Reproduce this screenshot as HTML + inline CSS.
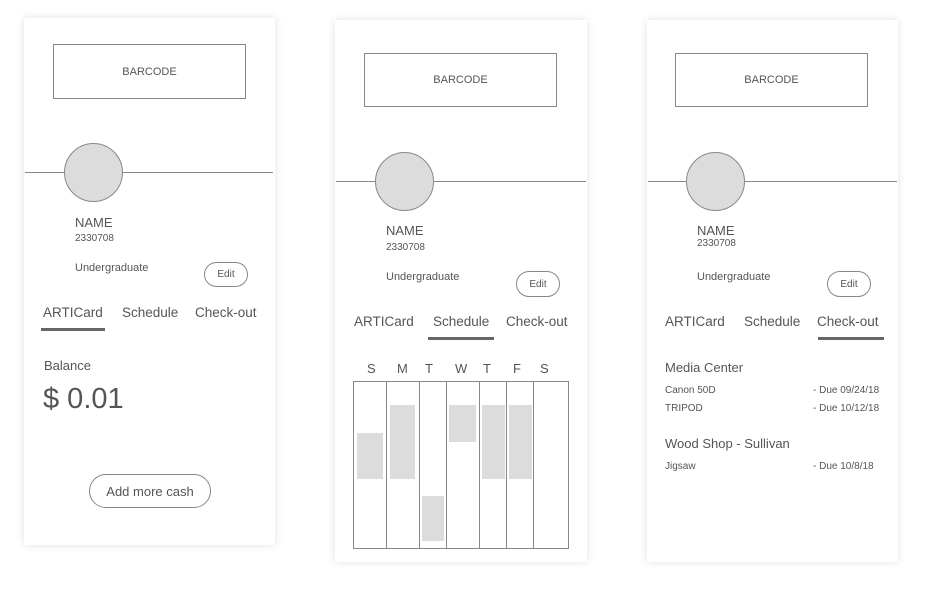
<!DOCTYPE html>
<html><head><meta charset="utf-8"><style>
*{margin:0;padding:0;box-sizing:border-box}
body{width:933px;height:597px;background:#fff;position:relative;overflow:hidden;font-family:"Liberation Sans",Arial,sans-serif;color:#555}
.a{position:absolute;line-height:1;white-space:nowrap}
.card{position:absolute;background:#fff;box-shadow:0 0 8px rgba(0,0,0,0.12)}
.bc{position:absolute;border:1px solid #888;font-size:11px;display:flex;align-items:center;justify-content:center;color:#555}
.ln{position:absolute;height:1px;background:#888}
.cir{position:absolute;width:59px;height:59px;border-radius:50%;background:#dcdcdc;border:1px solid #888}
.btn{position:absolute;border:1px solid #888;border-radius:14px;display:flex;align-items:center;justify-content:center;background:#fff}
.ul{position:absolute;height:3px;background:#666}
.blk{position:absolute;background:#dcdcdc}
.vl{position:absolute;width:1px;background:#888;top:381px;height:168px}
</style></head><body>

<!-- Card 1 -->
<div class="card" style="left:24px;top:18px;width:251px;height:527px"></div>
<div class="bc" style="left:53px;top:44px;width:193px;height:55px">BARCODE</div>
<div class="ln" style="left:25px;top:172px;width:248px"></div>
<div class="cir" style="left:64px;top:143px"></div>
<div class="a" style="left:75px;top:216px;font-size:13px">NAME</div>
<div class="a" style="left:75px;top:234px;font-size:10px">2330708</div>
<div class="a" style="left:75px;top:263px;font-size:11px">Undergraduate</div>
<div class="btn" style="left:204px;top:262px;width:44px;height:25px;font-size:10px">Edit</div>
<div class="a" style="left:43px;top:306px;font-size:13.5px">ARTICard</div>
<div class="a" style="left:122px;top:306px;font-size:13.5px">Schedule</div>
<div class="a" style="left:195px;top:306px;font-size:13.5px">Check-out</div>
<div class="ul" style="left:41px;top:328px;width:64px"></div>
<div class="a" style="left:44px;top:359px;font-size:13px">Balance</div>
<div class="a" style="left:43px;top:385px;font-size:29px">$ 0.01</div>
<div class="btn" style="left:89px;top:474px;width:122px;height:34px;border-radius:17px;font-size:13px">Add more cash</div>

<!-- Card 2 -->
<div class="card" style="left:335px;top:20px;width:252px;height:542px"></div>
<div class="bc" style="left:364px;top:53px;width:193px;height:54px">BARCODE</div>
<div class="ln" style="left:336px;top:181px;width:250px"></div>
<div class="cir" style="left:375px;top:152px"></div>
<div class="a" style="left:386px;top:224px;font-size:13px">NAME</div>
<div class="a" style="left:386px;top:243px;font-size:10px">2330708</div>
<div class="a" style="left:386px;top:272px;font-size:11px">Undergraduate</div>
<div class="btn" style="left:516px;top:271px;width:44px;height:26px;font-size:10px">Edit</div>
<div class="a" style="left:354px;top:315px;font-size:13.5px">ARTICard</div>
<div class="a" style="left:433px;top:315px;font-size:13.5px">Schedule</div>
<div class="a" style="left:506px;top:315px;font-size:13.5px">Check-out</div>
<div class="ul" style="left:428px;top:337px;width:66px"></div>
<div class="a" style="left:367px;top:362px;font-size:13px">S</div>
<div class="a" style="left:397px;top:362px;font-size:13px">M</div>
<div class="a" style="left:425px;top:362px;font-size:13px">T</div>
<div class="a" style="left:455px;top:362px;font-size:13px">W</div>
<div class="a" style="left:483px;top:362px;font-size:13px">T</div>
<div class="a" style="left:513px;top:362px;font-size:13px">F</div>
<div class="a" style="left:540px;top:362px;font-size:13px">S</div>
<div style="position:absolute;left:353px;top:381px;width:216px;height:168px;border:1px solid #888"></div>
<div class="vl" style="left:386px"></div>
<div class="vl" style="left:419px"></div>
<div class="vl" style="left:446px"></div>
<div class="vl" style="left:479px"></div>
<div class="vl" style="left:506px"></div>
<div class="vl" style="left:533px"></div>
<div class="blk" style="left:357px;top:433px;width:26px;height:46px"></div>
<div class="blk" style="left:390px;top:405px;width:25px;height:74px"></div>
<div class="blk" style="left:422px;top:496px;width:22px;height:45px"></div>
<div class="blk" style="left:449px;top:405px;width:27px;height:37px"></div>
<div class="blk" style="left:482px;top:405px;width:23px;height:74px"></div>
<div class="blk" style="left:509px;top:405px;width:23px;height:74px"></div>

<!-- Card 3 -->
<div class="card" style="left:647px;top:20px;width:251px;height:542px"></div>
<div class="bc" style="left:675px;top:53px;width:193px;height:54px">BARCODE</div>
<div class="ln" style="left:648px;top:181px;width:249px"></div>
<div class="cir" style="left:686px;top:152px"></div>
<div class="a" style="left:697px;top:224px;font-size:13px">NAME</div>
<div class="a" style="left:697px;top:239px;font-size:10px">2330708</div>
<div class="a" style="left:697px;top:272px;font-size:11px">Undergraduate</div>
<div class="btn" style="left:827px;top:271px;width:44px;height:26px;font-size:10px">Edit</div>
<div class="a" style="left:665px;top:315px;font-size:13.5px">ARTICard</div>
<div class="a" style="left:744px;top:315px;font-size:13.5px">Schedule</div>
<div class="a" style="left:817px;top:315px;font-size:13.5px">Check-out</div>
<div class="ul" style="left:818px;top:337px;width:66px"></div>
<div class="a" style="left:665px;top:361px;font-size:13px">Media Center</div>
<div class="a" style="left:665px;top:386px;font-size:10px">Canon 50D</div>
<div class="a" style="left:813px;top:386px;font-size:10px">- Due 09/24/18</div>
<div class="a" style="left:665px;top:404px;font-size:10px">TRIPOD</div>
<div class="a" style="left:813px;top:404px;font-size:10px">- Due 10/12/18</div>
<div class="a" style="left:665px;top:437px;font-size:13px">Wood Shop - Sullivan</div>
<div class="a" style="left:665px;top:462px;font-size:10px">Jigsaw</div>
<div class="a" style="left:813px;top:462px;font-size:10px">- Due 10/8/18</div>

</body></html>
